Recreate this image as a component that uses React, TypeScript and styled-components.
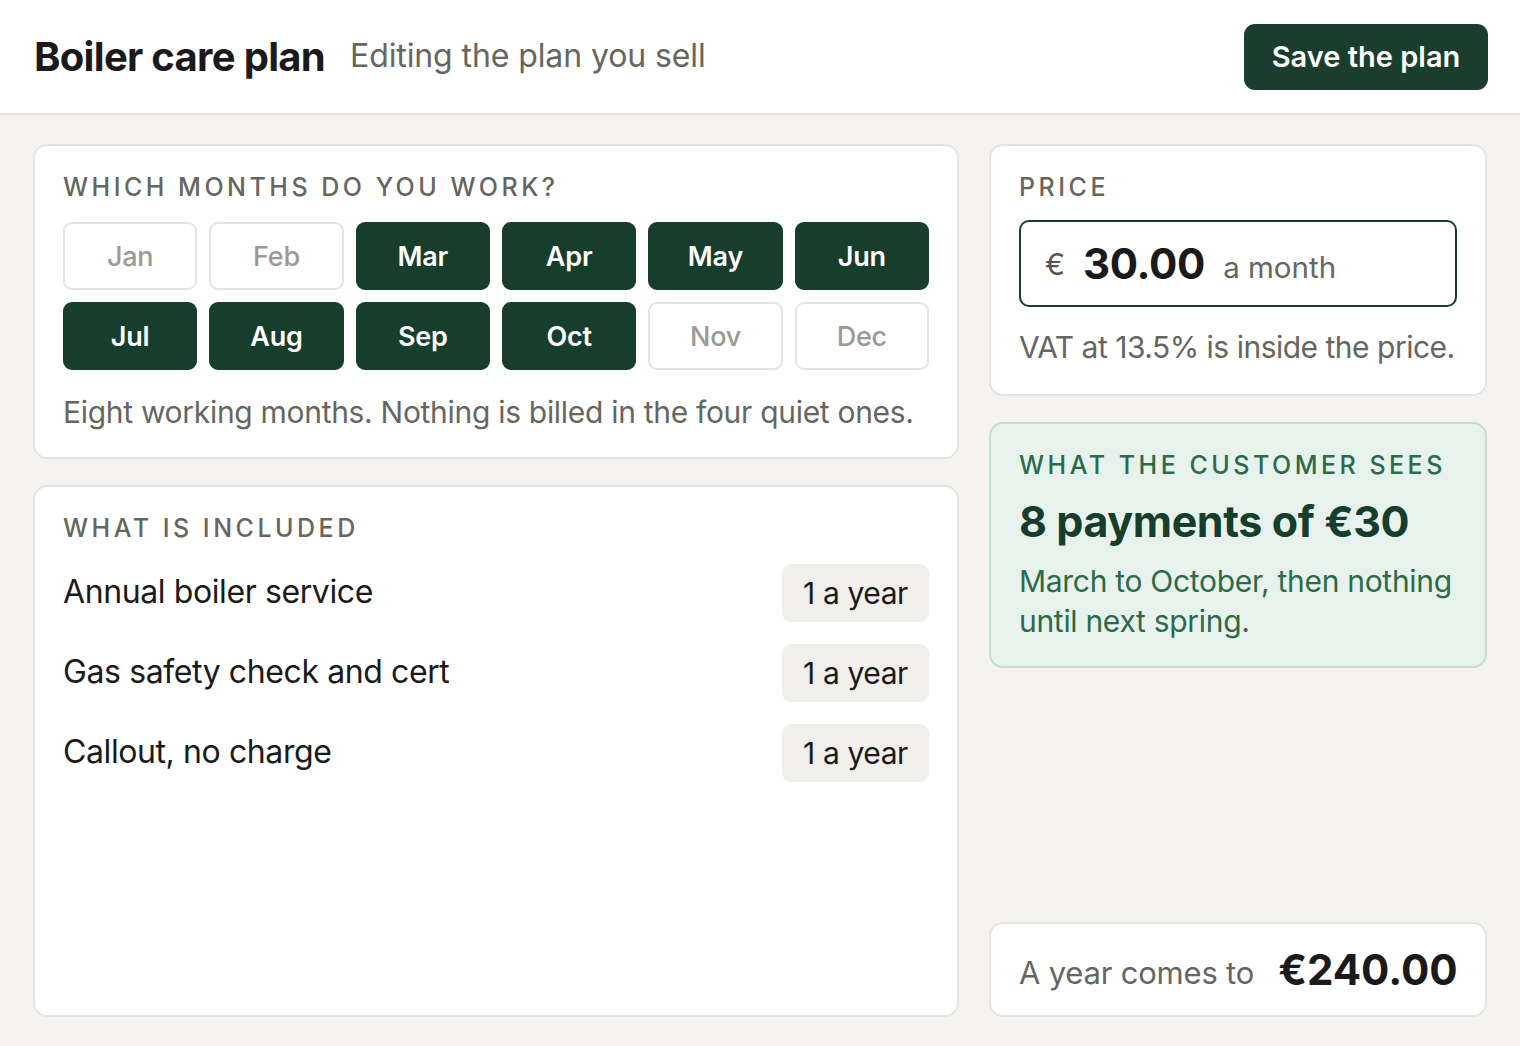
import React from "react";
import styled, { createGlobalStyle } from "styled-components";

const Global = createGlobalStyle`
  html, body { margin: 0; padding: 0; }
  body { font-family: Inter, "Liberation Sans", sans-serif; background: #f4f3ef; color: #1a1a1a; }
  * { box-sizing: border-box; }
`;

const Page = styled.div`
  min-height: 1046px;
  display: flex;
  flex-direction: column;
`;

const Header = styled.header`
  height: 115px;
  background: #ffffff;
  border-bottom: 2px solid #e6e4de;
  display: flex;
  align-items: center;
  padding: 0 32px 0 34px;
  gap: 25px;
`;

const Title = styled.h1`
  margin: 0;
  font-size: 40px;
  font-weight: 700;
  letter-spacing: -0.7px;
  color: #1a1a1a;
`;

const Subtitle = styled.span`
  font-size: 32px;
  color: #666660;
  letter-spacing: -0.1px;
  flex: 1;
  margin-top: -2px;
`;

const SaveButton = styled.button`
  height: 66px;
  width: 244px;
  border: none;
  border-radius: 11px;
  background: #1a3d2e;
  color: #ffffff;
  font-family: inherit;
  font-size: 29px;
  font-weight: 600;
  letter-spacing: 0;
`;

const Main = styled.main`
  flex: 1;
  display: grid;
  grid-template-columns: 926px 498px;
  gap: 30px;
  padding: 29px 32px 29px 33px;
`;

const Column = styled.div`
  display: flex;
  flex-direction: column;
  gap: 26px;
`;

const Card = styled.section<{ $grow?: boolean; $tint?: boolean; $bottom?: number }>`
  background: ${(p) => (p.$tint ? "#e8f2ec" : "#ffffff")};
  border: 2px solid ${(p) => (p.$tint ? "#c9dcd1" : "#e6e4de")};
  border-radius: 14px;
  padding: 25px 28px ${(p) => p.$bottom ?? 25}px 28px;
  ${(p) => (p.$grow ? "flex: 1;" : "")}
`;

const Label = styled.div<{ $green?: boolean }>`
  font-size: 25px;
  font-weight: 500;
  letter-spacing: 3.5px;
  text-transform: uppercase;
  color: ${(p) => (p.$green ? "#2d6a4a" : "#666660")};
  line-height: 32px;
  white-space: nowrap;
`;

const MonthGrid = styled.div`
  display: grid;
  grid-template-columns: repeat(6, 1fr);
  gap: 12px;
  margin-top: 19px;
`;

const Month = styled.button<{ $on: boolean }>`
  height: 68px;
  border-radius: 9px;
  font-family: inherit;
  font-size: 27px;
  font-weight: ${(p) => (p.$on ? 600 : 500)};
  letter-spacing: -0.2px;
  background: ${(p) => (p.$on ? "#173d2d" : "#ffffff")};
  color: ${(p) => (p.$on ? "#ffffff" : "#9a9a94")};
  border: 2px solid ${(p) => (p.$on ? "#173d2d" : "#e6e4de")};
`;

const Note = styled.p<{ $tone?: "muted" | "green"; $gap?: number; $nowrap?: boolean }>`
  margin: ${(p) => p.$gap ?? 22}px 0 0;
  font-size: 30px;
  line-height: 40px;
  letter-spacing: ${(p) => (p.$nowrap ? "-0.5px" : "-0.3px")};
  white-space: ${(p) => (p.$nowrap ? "nowrap" : "normal")};
  color: ${(p) => (p.$tone === "green" ? "#2d6a4a" : "#666660")};
`;

const Items = styled.div`
  display: flex;
  flex-direction: column;
  gap: 22px;
  margin-top: 20px;
`;

const Item = styled.div`
  display: flex;
  justify-content: space-between;
  align-items: center;
`;

const ItemName = styled.span`
  font-size: 32px;
  letter-spacing: -0.4px;
  color: #1a1a1a;
  margin-top: -4px;
`;

const Pill = styled.span`
  height: 58px;
  padding: 0 21px;
  border-radius: 9px;
  background: #f0efe9;
  display: flex;
  align-items: center;
  font-size: 30px;
  letter-spacing: -0.4px;
  color: #1a1a1a;
`;

const PriceBox = styled.div`
  margin-top: 17px;
  height: 87px;
  border: 2px solid #1a3d2e;
  border-radius: 10px;
  display: flex;
  align-items: center;
  padding: 0 22px 0 24px;
  gap: 18px;
`;

const Currency = styled.span`
  font-size: 30px;
  color: #555550;
`;

const Amount = styled.span`
  font-size: 42px;
  font-weight: 700;
  letter-spacing: -0.3px;
  color: #1a1a1a;
`;

const Unit = styled.span`
  font-size: 29.5px;
  color: #666660;
  margin-top: 6px;
`;

const Big = styled.div`
  margin-top: 14px;
  font-size: 43px;
  font-weight: 700;
  letter-spacing: -0.4px;
  color: #173d2d;
`;

const Spacer = styled.div`
  flex: 1;
`;

const TotalCard = styled.section`
  background: #ffffff;
  border: 2px solid #e6e4de;
  border-radius: 14px;
  height: 95px;
  display: flex;
  align-items: center;
  padding: 0 28px;
  gap: 24px;
`;

const TotalLabel = styled.span`
  font-size: 31px;
  color: #666660;
  letter-spacing: -0.2px;
  margin-top: 6px;
  white-space: nowrap;
`;

const TotalValue = styled.span`
  font-size: 42px;
  font-weight: 700;
  letter-spacing: 0;
  color: #1a1a1a;
  white-space: nowrap;
`;

const months = [
  ["Jan", false], ["Feb", false], ["Mar", true], ["Apr", true], ["May", true], ["Jun", true],
  ["Jul", true], ["Aug", true], ["Sep", true], ["Oct", true], ["Nov", false], ["Dec", false],
] as const;

const items = ["Annual boiler service", "Gas safety check and cert", "Callout, no charge"];

export default function App() {
  return (
    <Page>
      <Global />
      <Header>
        <Title>Boiler care plan</Title>
        <Subtitle>Editing the plan you sell</Subtitle>
        <SaveButton>Save the plan</SaveButton>
      </Header>
      <Main>
        <Column>
          <Card>
            <Label>Which months do you work?</Label>
            <MonthGrid>
              {months.map(([m, on]) => (
                <Month key={m} $on={on}>{m}</Month>
              ))}
            </MonthGrid>
            <Note>Eight working months. Nothing is billed in the four quiet ones.</Note>
          </Card>
          <Card $grow>
            <Label>What is included</Label>
            <Items>
              {items.map((it) => (
                <Item key={it}>
                  <ItemName>{it}</ItemName>
                  <Pill>1 a year</Pill>
                </Item>
              ))}
            </Items>
          </Card>
        </Column>
        <Column>
          <Card $bottom={27}>
            <Label>Price</Label>
            <PriceBox>
              <Currency>€</Currency>
              <Amount>30.00</Amount>
              <Unit>a month</Unit>
            </PriceBox>
            <Note $gap={20} $nowrap>VAT at 13.5% is inside the price.</Note>
          </Card>
          <Card $tint $bottom={25}>
            <Label $green>What the customer sees</Label>
            <Big>8 payments of €30</Big>
            <Note $tone="green" $gap={14}>
              March to October, then nothing until next spring.
            </Note>
          </Card>
          <Spacer />
          <TotalCard>
            <TotalLabel>A year comes to</TotalLabel>
            <TotalValue>€240.00</TotalValue>
          </TotalCard>
        </Column>
      </Main>
    </Page>
  );
}
